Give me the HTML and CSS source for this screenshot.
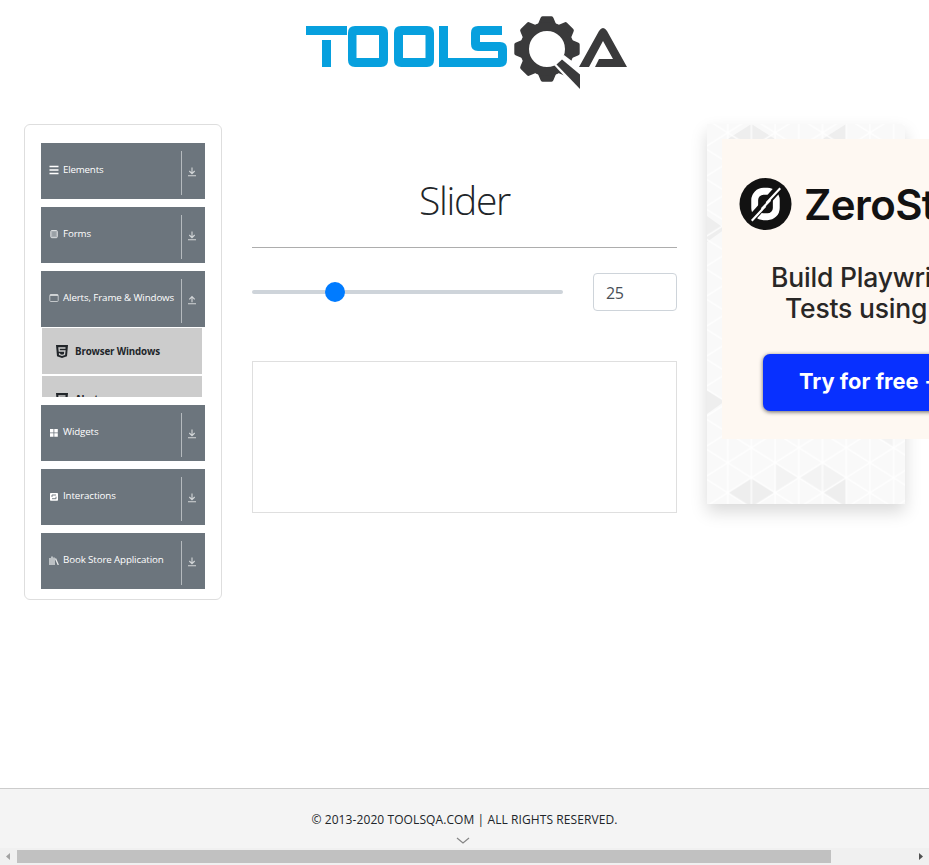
FILE: index.html
```html
<!DOCTYPE html>
<html lang="en">
<head>
<meta charset="utf-8">
<title>ToolsQA</title>
<link rel="stylesheet" href="styles.css">
</head>
<body>
<svg class="defs" aria-hidden="true">
  <symbol id="down" viewBox="0 0 10 10"><path d="M5 .6v6M2.3 4 5 6.7 7.7 4M1 8.7h8" fill="none" stroke="currentColor" stroke-width="1.1"/></symbol>
  <symbol id="up" viewBox="0 0 10 10"><path d="M5 7.3V2M2.3 4.3 5 1.6l2.7 2.7M1 8.7h8" fill="none" stroke="currentColor" stroke-width="1.1"/></symbol>
  <symbol id="html5" viewBox="0 0 12 13"><path d="M0 0h12l-1 11.2L6 13l-5-1.8z" fill="#212529"/><path d="M9.500 3H3l.3 3h5.600l-.4 3.600-2.500.8-2.400-.8-.1-1.300" fill="none" stroke="#ccc" stroke-width="1.300"/></symbol>
</svg>
<header class="header">
  <svg class="logo" viewBox="0 0 322 74" role="img">
    <g fill="#07a0de">
      <path d="M0 10h41v9H0zM16 24h9v27h-9z"/>
      <path fill-rule="evenodd" d="M49 10h26q7 0 7 7v27q0 7-7 7H49q-7 0-7-7V17q0-7 7-7zM50.500 19v23H73V19z"/>
      <path fill-rule="evenodd" d="M95 10h26q7 0 7 7v27q0 7-7 7H95q-7 0-7-7V17q0-7 7-7zM97 19v23h22.500V19z"/>
      <path d="M133 10h9v32h50v-7h-20q-7 0-7-7V17q0-7 7-7h24v9h-22v7h20q7 0 7 7v11q0 7-7 7h-61z"/>
    </g>
    <g fill="#3a3a3b">
      <g transform="translate(241 33)">
        <g id="teeth">
          <path id="tooth" d="M-9-25l2.500-6q.5-1.700 2-1.700h9q1.500 0 2 1.700L9-25V-20H-9z"/>
          <use href="#tooth" transform="rotate(90)"/><use href="#tooth" transform="rotate(180)"/><use href="#tooth" transform="rotate(270)"/>
        </g>
        <use href="#teeth" transform="rotate(45)"/>
        <circle r="22.500" fill="none" stroke="#3a3a3b" stroke-width="9"/>
        <path d="M7 16 17 6 42 25V44H33z" fill="#fff"/>
        <path d="M9.500 15.500 15 10.500 33 25.500V40z"/>
      </g>
      <path d="M273 51 293 15q4-6 8 0l20 36h-32l4-8h14l-10-18-14 26z"/>
    </g>
  </svg>
</header>
<main class="main">
  <nav class="sidebar">
    <div class="group"><svg class="ico" viewBox="0 0 10 10"><path d="M.5 1.500h9M.5 5h9M.5 8.500h9" stroke="#fff" stroke-width="1.500"/></svg><span class="label l-elements">Elements</span><span class="arrow"><svg><use href="#down"/></svg></span></div>
    <div class="group"><svg class="ico" viewBox="0 0 10 10"><rect x="1.800" y="1.500" width="6.500" height="7.200" rx="1" fill="#a5abb0" stroke="#dadddf"/><path d="M3.300 4h3.500M3.300 6h3.500" stroke="#858d94" stroke-width=".7"/></svg><span class="label l-forms">Forms</span><span class="arrow"><svg><use href="#down"/></svg></span></div>
    <div class="group"><svg class="ico" viewBox="0 0 10 10"><rect x=".8" y="1.500" width="8.400" height="7" rx=".8" fill="none" stroke="#c3c7ca"/><path d="M1 2.200h8" stroke="#e6e8e9" stroke-width="1.200"/></svg><span class="label l-alerts">Alerts, Frame &amp; Windows</span><span class="arrow"><svg><use href="#up"/></svg></span></div>
    <ul class="submenu">
      <li><svg class="h5"><use href="#html5"/></svg><span>Browser Windows</span></li>
      <li><svg class="h5"><use href="#html5"/></svg><span>Alerts</span></li>
    </ul>
    <div class="group"><svg class="ico" viewBox="0 0 10 10"><path d="M1 2h3.500v3.500H1zM5.300 2h3.500v3.500H5.300zM1 6.300h3.500v3.500H1zM5.300 6.300h3.500v3.500H5.300z" fill="#fff"/></svg><span class="label l-widgets">Widgets</span><span class="arrow"><svg><use href="#down"/></svg></span></div>
    <div class="group"><svg class="ico" viewBox="0 0 10 10"><rect x="1" y="2" width="8" height="7.700" rx=".8" fill="#fff"/><path d="M3 6V4h4M7 5.700v2H3" fill="none" stroke="#6c757d" stroke-width=".9"/></svg><span class="label l-inter">Interactions</span><span class="arrow"><svg><use href="#down"/></svg></span></div>
    <div class="group"><svg class="ico" viewBox="0 0 10 10"><path d="M1 3v7M3 1.500V10M5 2.500V10M6.500 3.500 9.300 10" fill="none" stroke="#e8eaeb" stroke-width="1.300"/></svg><span class="label l-book">Book Store Application</span><span class="arrow"><svg><use href="#down"/></svg></span></div>
  </nav>
  <section class="content">
    <h1><span>Slider</span></h1>
    <div class="controls"><input class="range" type="range" min="0" max="100" value="25"><input class="value" value="25"></div>
    <div class="panel"></div>
  </section>
  <aside class="side">
    <svg class="texture" viewBox="0 0 198 380">
      <defs><pattern id="tri" width="47.400" height="30" patternUnits="userSpaceOnUse" x="20.700" y="8.700"><path d="M0 0v30M23.700 0v30M47.400 0v30M0 0l47.400 30M47.400 0 0 30" fill="none" stroke="#fff" stroke-width="1.200"/></pattern></defs>
      <path fill="#f9f9f9" d="M0 0h198v380H0z"/>
      <g fill="#eeeeee"><path d="m20.700 368.700 23.700-15 23.700 15-23.700 15zM115.500 368.700l23.700-15v30zM20.700 15 44.400 0l23.700 15zM115.500 15l23.700-15v15zM0 92l18 13-18 13zM0 266l18 11-18 13z"/></g>
      <path fill="#f3f3f3" d="m68.100 338.700 23.700 15-23.700 15zM91.800 353.700l23.700-15v30zM115.500 338.700l23.700 15-23.700 15zM162.900 308.700l23.700 15v-30z"/>
      <path fill="url(#tri)" d="M0 0h198v380H0z"/>
    </svg>
    <div class="ad">
      <div class="brand">
        <svg viewBox="0 0 54 54"><circle cx="27" cy="27" r="26.500" fill="#121212"/><rect x="16" y="14" width="22" height="26" rx="9" fill="none" stroke="#fff" stroke-width="7"/><path d="M10 45 43 8" stroke="#121212" stroke-width="8"/><path d="m13 44 14-15M28 26l14-15M23 32l9-9" stroke="#fff" stroke-width="2.200"/></svg>
        <span>ZeroStep</span>
      </div>
      <p class="pitch"><span class="p1">Build Playwright</span><span class="p2">Tests using AI</span></p>
      <div class="cta">Try for free →</div>
    </div>
  </aside>
</main>
<footer class="footer">
  <span class="copy">© 2013-2020 TOOLSQA.COM | ALL RIGHTS RESERVED.</span>
  <svg class="chevron" viewBox="0 0 14 8"><path d="m1 1 6 5 6-5" fill="none" stroke="#858585" stroke-width="1.200"/></svg>
</footer>
<div class="scrollbar"><svg viewBox="0 0 17 17"><path d="M10 5v7L6 8.500z" fill="#a3a3a3"/></svg><div class="track"><div class="thumb"></div></div><svg viewBox="0 0 17 17"><path d="M7 5v7l4-3.500z" fill="#505050"/></svg></div>
</body>
</html>
```
FILE: styles.css
```css
* { box-sizing: border-box; }
body {
  margin: 0;
  width: 929px;
  height: 865px;
  overflow: hidden;
  display: flex;
  flex-direction: column;
  background: #fff;
  color: #212529;
  font-family: "Open Sans", "Noto Sans", sans-serif;
}
svg { display: block; }
.defs { display: none; }
.header { height: 124px; padding: 16px 0 0 306px; }
.logo { width: 322px; height: 74px; }
.main { flex: 1; display: flex; align-items: flex-start; padding-left: 24px; }
.sidebar {
  width: 198px;
  height: 476px;
  border: 1px solid #dedede;
  border-radius: 6px;
  padding: 18px 16px 0;
  display: flex;
  flex-direction: column;
  gap: 8px;
}
.group {
  flex: none;
  height: 56px;
  display: flex;
  background: #6c757d;
  color: #fff;
  font-size: 9.75px;
  font-weight: 500;
  line-height: 14px;
  white-space: nowrap;
}
.ico { width: 10px; height: 10px; margin: 22px 4px 0 8px; }
.label { flex: 1; margin-top: 19.5px; letter-spacing: -0.12px; }
.l-elements { letter-spacing: -0.2px; }
.arrow { width: 24px; height: 44px; margin-top: 8px; border-left: 1px solid #b5babe; padding: 16px 0 0 5px; color: #d3d6d8; }
.arrow svg { width: 10px; height: 10px; }
.submenu {
  flex: none;
  list-style: none;
  height: 70px;
  margin: -8px 0 0;
  padding: 1px 3px 0 1px;
  overflow: hidden;
  font-size: 9.75px;
  font-weight: 700;
  letter-spacing: -0.15px;
}
.submenu li { display: flex; align-items: center; height: 46px; margin-bottom: 2px; padding-left: 14px; background: #ccc; }
.h5 { width: 12px; height: 13px; margin-right: 7px; }
.content { width: 425px; margin-left: 30px; padding-top: 48px; }
h1 {
  height: 76px;
  margin: 0 0 25px;
  border-bottom: 1px solid #adadad;
  text-align: center;
  font-size: 39px;
  font-weight: 300;
  line-height: 56px;
  letter-spacing: -1.3px;
}
.controls { display: flex; justify-content: space-between; align-items: center; height: 38px; }
.range { appearance: none; width: 311px; height: 20px; margin: 0; background: transparent; }
.range::-webkit-slider-runnable-track { height: 4px; border-radius: 2px; background: #ced4da; }
.range::-webkit-slider-thumb { appearance: none; width: 20px; height: 20px; margin-top: -8px; border-radius: 50%; background: #007bff; }
.value { width: 84px; height: 38px; padding: 4px 12px 2px; border: 1px solid #ced4da; border-radius: 4px; color: #495057; font: 16px "Open Sans", sans-serif; letter-spacing: -0.3px; }
.panel { height: 152px; margin-top: 50px; border: 1px solid #dfdfdf; }
.side { flex: none; display: grid; width: 198px; height: 380px; margin-left: 30px; box-shadow: 0 8px 16px rgba(0,0,0,.15); }
.texture { grid-area: 1 / 1; width: 198px; height: 380px; }
.ad { grid-area: 1 / 1; width: 300px; height: 300px; margin: 15px 0 0 15px; padding: 38px 0 0 17px; background: #fef8f2; font-family: Inter, sans-serif; white-space: nowrap; z-index: 1; }
.brand { display: flex; align-items: center; height: 54px; gap: 12px; color: #121212; font-size: 42px; font-weight: 600; letter-spacing: -0.6px; }
.brand svg { width: 53px; height: 54px; }
.pitch { margin: 31px 0 0; color: #292726; font-size: 26.5px; font-weight: 500; line-height: 31px; letter-spacing: -0.2px; }
.pitch span { display: block; }
.p1 { padding-left: 32px; }
.p2 { padding-left: 46px; }
.cta { width: 218px; height: 57px; margin: 30px 0 0 24px; padding-left: 36px; border-radius: 7px; background: #0830ff; box-shadow: 0 1px 4px rgba(0,0,0,.6); color: #fff; font-size: 21.8px; font-weight: 700; line-height: 55px; }
.footer { height: 60px; border-top: 1px solid #ccc; background: #f4f4f4; display: flex; flex-direction: column; align-items: center; padding-top: 22px; }
.copy { height: 17px; font-size: 12px; line-height: 17px; letter-spacing: 0.09px; }
.chevron { width: 14px; height: 8px; margin: 9px 3px 0 0; }
.scrollbar { display: flex; height: 17px; background: #f0f0f0; }
.scrollbar svg { width: 17px; height: 17px; }
.track { flex: 1; padding: 2px 0; }
.thumb { width: 814px; height: 13px; background: #c1c1c1; }
```
